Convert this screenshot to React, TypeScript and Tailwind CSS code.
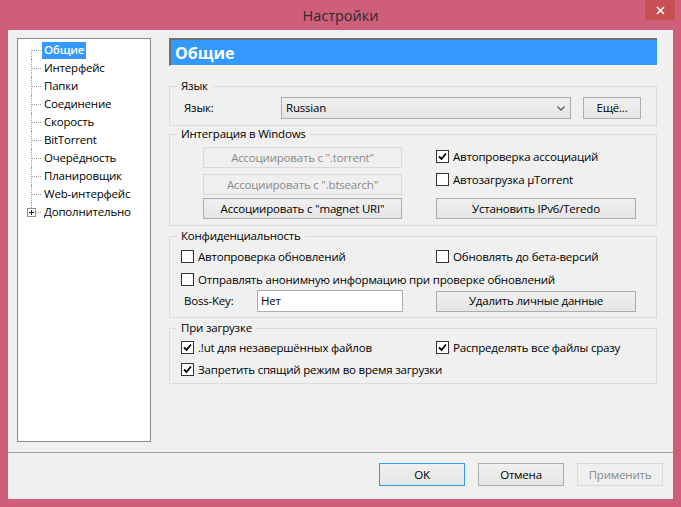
import React from 'react';

const font = { fontFamily: '"Open Sans", "Noto Sans", sans-serif' };

function CheckBox({ checked, label }: { checked?: boolean; label: string }) {
  return (
    <div className="flex items-center h-[17px] gap-[4px]">
      <span className="w-[13px] h-[13px] border border-[#333333] bg-white flex items-center justify-center shrink-0">
        {checked && (
          <svg width="9" height="9" viewBox="0 0 9 9">
            <path d="M1 4.5 L3.5 7 L8 1.5" fill="none" stroke="#000" strokeWidth="1.8" />
          </svg>
        )}
      </span>
      <span className="text-[11.5px] tracking-[-0.2px] text-black whitespace-nowrap">{label}</span>
    </div>
  );
}

function Btn({
  children,
  disabled,
  primary,
  className = '',
}: {
  children: React.ReactNode;
  disabled?: boolean;
  primary?: boolean;
  className?: string;
}) {
  const look = disabled
    ? 'border-[#D9D9D9] bg-[#EFEFEF] text-[#8A8A8A]'
    : primary
      ? 'border-[#3399FF] bg-gradient-to-b from-[#F0F0F0] to-[#E5E5E5] text-black'
      : 'border-[#ACACAC] bg-gradient-to-b from-[#F0F0F0] to-[#E5E5E5] text-black';
  return (
    <div
      className={`border flex items-center justify-center text-[11.5px] tracking-[-0.2px] whitespace-nowrap ${look} ${className}`}
    >
      {children}
    </div>
  );
}

function Group({ title, className = '', children }: { title: string; className?: string; children: React.ReactNode }) {
  return (
    <fieldset className={`border border-[#DCDCDC] ${className}`}>
      <legend className="ml-[7px] px-[4px] text-[11.5px] tracking-[-0.2px] leading-[16px] text-black">{title}</legend>
      {children}
    </fieldset>
  );
}

const treeItems = [
  'Общие',
  'Интерфейс',
  'Папки',
  'Соединение',
  'Скорость',
  'BitTorrent',
  'Очерёдность',
  'Планировщик',
  'Web-интерфейс',
  'Дополнительно',
];

function Tree() {
  return (
    <div className="w-[134px] h-[404px] border border-[#828790] bg-white pt-[2px]">
      {treeItems.map((item, i) => {
        const first = i === 0;
        const last = i === treeItems.length - 1;
        return (
          <div key={item} className="flex items-center h-[18px]">
            <div className="relative w-[23px] h-[18px] shrink-0">
              <div
                className={`absolute left-[13px] w-0 border-l border-dotted border-[#A0A0A0] ${
                  first ? 'top-[9px] bottom-0' : last ? 'top-0 h-[9px]' : 'top-0 bottom-0'
                }`}
              />
              <div className="absolute left-[14px] top-[9px] w-[9px] h-0 border-t border-dotted border-[#A0A0A0]" />
              {last && (
                <div className="absolute left-[9px] top-[5px] w-[9px] h-[9px] border border-[#919191] bg-white flex items-center justify-center">
                  <svg width="5" height="5" viewBox="0 0 5 5">
                    <path d="M0 2.5 H5 M2.5 0 V5" stroke="#1B1B1B" strokeWidth="1" />
                  </svg>
                </div>
              )}
            </div>
            <span
              className={`ml-[1px] px-[2px] h-[17px] flex items-center text-[11.5px] tracking-[-0.2px] whitespace-nowrap ${
                first ? 'bg-[#3399FF] text-white font-semibold' : 'text-black'
              }`}
            >
              {item}
            </span>
          </div>
        );
      })}
    </div>
  );
}

export default function App() {
  return (
    <div className="w-[681px] h-[507px] bg-[#CE5E7A] overflow-hidden" style={font}>
      {/* заголовок окна */}
      <div className="relative h-[30px] flex items-center justify-center">
        <span className="text-[14.5px] text-[#2B2B2B] mt-[1px]">Настройки</span>
        <div className="absolute right-[6px] top-0 w-[30px] h-[20px] bg-[#C75050] flex items-center justify-center">
          <svg width="9" height="9" viewBox="0 0 9 9">
            <path d="M1 1 L8 8 M8 1 L1 8" stroke="#fff" strokeWidth="1.6" />
          </svg>
        </div>
      </div>

      <div className="mx-[8px] h-[469px] bg-[#F0F0F0] flex flex-col">
        <div className="flex pt-[8px] pl-[9px]">
          <Tree />

          <div className="ml-[18px] w-[488px] flex flex-col">
            <div className="h-[28px] bg-[#3399FF] border-t-2 border-l-2 border-[#6E6E6E] border-b border-b-white flex items-center pl-[4px]">
              <span className="text-[16px] font-bold text-white">Общие</span>
            </div>

            {/* Язык */}
            <Group title="Язык" className="mt-[12px] pb-[6px]">
              <div className="flex items-center mt-[3px] pl-[14px] h-[22px]">
                <span className="w-[97px] text-[11.5px] tracking-[-0.2px]">Язык:</span>
                <div className="w-[290px] h-[22px] border border-[#ACACAC] bg-gradient-to-b from-[#F0F0F0] to-[#E5E5E5] flex items-center justify-between pl-[4px] pr-[5px]">
                  <span className="text-[11.5px] tracking-[-0.2px]">Russian</span>
                  <svg width="8" height="5" viewBox="0 0 8 5">
                    <path d="M0.5 0.5 L4 4 L7.5 0.5" fill="none" stroke="#5A5A5A" strokeWidth="1.3" />
                  </svg>
                </div>
                <Btn className="ml-[12px] w-[58px] h-[22px]">Ещё...</Btn>
              </div>
            </Group>

            {/* Интеграция в Windows */}
            <Group title="Интеграция в Windows" className="pb-[6px]">
              <div className="flex mt-[5px]">
                <div className="ml-[33px] w-[199px] flex flex-col">
                  <Btn disabled className="h-[21px]">Ассоциировать с ".torrent"</Btn>
                  <Btn disabled className="h-[21px] mt-[6px]">Ассоциировать с ".btsearch"</Btn>
                  <Btn className="h-[21px] mt-[3px]">Ассоциировать с "magnet URI"</Btn>
                </div>
                <div className="ml-[34px] w-[200px] flex flex-col">
                  <div className="mt-[1px]">
                    <CheckBox checked label="Автопроверка ассоциаций" />
                  </div>
                  <div className="mt-[6px]">
                    <CheckBox label="Автозагрузка µTorrent" />
                  </div>
                  <Btn className="h-[21px] mt-[10px]">Установить IPv6/Teredo</Btn>
                </div>
              </div>
            </Group>

            {/* Конфиденциальность */}
            <Group title="Конфиденциальность" className="mt-[2px] pb-[5px]">
              <div className="flex mt-[4px] pl-[11px]">
                <div className="w-[255px]">
                  <CheckBox label="Автопроверка обновлений" />
                </div>
                <CheckBox label="Обновлять до бета-версий" />
              </div>
              <div className="mt-[6px] pl-[11px]">
                <CheckBox label="Отправлять анонимную информацию при проверке обновлений" />
              </div>
              <div className="flex items-center mt-[2px] pl-[14px]">
                <span className="w-[73px] text-[11.5px] tracking-[-0.2px]">Boss-Key:</span>
                <div className="w-[146px] h-[22px] border border-[#ABADB3] bg-white flex items-center pl-[3px] text-[11.5px] tracking-[-0.2px]">
                  Нет
                </div>
                <Btn className="ml-[33px] w-[200px] h-[21px]">Удалить личные данные</Btn>
              </div>
            </Group>

            {/* При загрузке */}
            <Group title="При загрузке" className="mt-[2px] pb-[5px]">
              <div className="flex mt-[3px] pl-[11px]">
                <div className="w-[255px]">
                  <CheckBox checked label=".!ut для незавершённых файлов" />
                </div>
                <CheckBox checked label="Распределять все файлы сразу" />
              </div>
              <div className="mt-[5px] pl-[11px]">
                <CheckBox checked label="Запретить спящий режим во время загрузки" />
              </div>
            </Group>
          </div>
        </div>

        <div className="mt-[10px] border-t border-[#A0A0A0]" />

        <div className="flex justify-end gap-[13px] mt-[10px] pr-[10px]">
          <Btn primary className="w-[86px] h-[23px]">OK</Btn>
          <Btn className="w-[86px] h-[23px]">Отмена</Btn>
          <Btn disabled className="w-[86px] h-[23px]">Применить</Btn>
        </div>
      </div>
    </div>
  );
}
